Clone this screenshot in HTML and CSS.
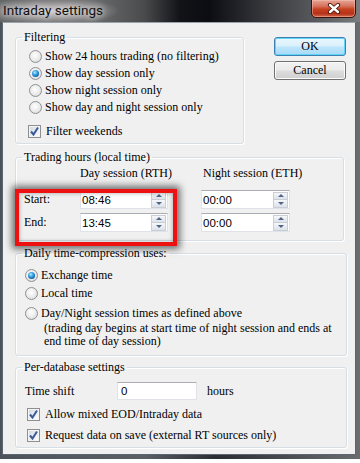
FILE: index.html
```html
<!DOCTYPE html>
<html>
<head>
<meta charset="utf-8">
<link rel="stylesheet" href="styles.css">
</head>
<body>
<div class="window">
  <div class="titlebar">
    <span class="title">Intraday settings</span>
    <div class="close">
      <svg width="14" height="11" viewBox="0 0 14 11"><path d="M3 2 L11 9 M11 2 L3 9" stroke="#4a1208" stroke-width="4.2" stroke-linecap="round"/><path d="M3 2 L11 9 M11 2 L3 9" stroke="#fff" stroke-width="2.4" stroke-linecap="round"/></svg>
    </div>
  </div>
  <div class="client">
    <div class="top-row">
      <fieldset class="group g-filter">
        <legend>Filtering</legend>
        <div class="filter-body">
          <div class="opt"><span class="radio"></span>Show 24 hours trading (no filtering)</div>
          <div class="opt"><span class="radio on"></span>Show day session only</div>
          <div class="opt"><span class="radio"></span>Show night session only</div>
          <div class="opt"><span class="radio"></span>Show day and night session only</div>
          <div class="opt chk-first"><span class="check"><svg width="11" height="11" viewBox="0 0 11 11"><path d="M2 5.5 L4.5 8.5 L9 1.5" fill="none" stroke="#3b5a9a" stroke-width="2"/></svg></span>Filter weekends</div>
        </div>
      </fieldset>
      <div class="buttons">
        <div class="btn default">OK</div>
        <div class="btn">Cancel</div>
      </div>
    </div>

    <fieldset class="group g-hours">
      <legend>Trading hours (local time)</legend>
      <div class="hours-grid">
        <span></span>
        <span class="colhead">Day session (RTH)</span>
        <span class="colhead night">Night session (ETH)</span>
        <span class="rowlab">Start:</span>
        <div class="field day"><span class="val">08:46</span><span class="spin"><span class="sp up"><i></i></span><span class="sp down"><i></i></span></span></div>
        <div class="field"><span class="val">00:00</span><span class="spin"><span class="sp up"><i></i></span><span class="sp down"><i></i></span></span></div>
        <span class="rowlab">End:</span>
        <div class="field day"><span class="val">13:45</span><span class="spin"><span class="sp up"><i></i></span><span class="sp down"><i></i></span></span></div>
        <div class="field"><span class="val">00:00</span><span class="spin"><span class="sp up"><i></i></span><span class="sp down"><i></i></span></span></div>
      </div>
      <div class="highlight"></div>
    </fieldset>

    <fieldset class="group g-daily">
      <legend>Daily time-compression uses:</legend>
      <div class="daily-body">
        <div class="opt"><span class="radio on"></span>Exchange time</div>
        <div class="opt"><span class="radio"></span>Local time</div>
        <div class="opt opt-dn"><span class="radio"></span>Day/Night session times as defined above</div>
        <div class="note">(trading day begins at start time of night session and ends at<br>end time of day session)</div>
      </div>
    </fieldset>

    <fieldset class="group g-db">
      <legend>Per-database settings</legend>
      <div class="db-body">
        <div class="shift-row">
          <span class="shift-lab">Time shift</span>
          <div class="field shift"><span class="val">0</span></div>
          <span class="hours">hours</span>
        </div>
        <div class="opt c1"><span class="check"><svg width="11" height="11" viewBox="0 0 11 11"><path d="M2 5.5 L4.5 8.5 L9 1.5" fill="none" stroke="#3b5a9a" stroke-width="2"/></svg></span>Allow mixed EOD/Intraday data</div>
        <div class="opt c2"><span class="check"><svg width="11" height="11" viewBox="0 0 11 11"><path d="M2 5.5 L4.5 8.5 L9 1.5" fill="none" stroke="#3b5a9a" stroke-width="2"/></svg></span>Request data on save (external RT sources only)</div>
      </div>
    </fieldset>
  </div>
</div>
</body>
</html>
```

FILE: styles.css
```css
* { box-sizing: border-box; }
html, body { margin: 0; padding: 0; background: #ffffff; }
body {
  font-family: "Liberation Serif", "Times New Roman", serif;
  font-size: 12px;
  color: #000;
}
.window {
  width: 360px;
  height: 459px;
  display: flex;
  flex-direction: column;
  background: linear-gradient(90deg, #4b525a 0%, #5b6066 40%, #2a2d31 60%, #6a6d70 100%);
}
.titlebar {
  height: 22px;
  display: flex;
  align-items: flex-start;
  padding-left: 3px;
  background:
    radial-gradient(ellipse 70px 14px at 50px 11px, rgba(235,225,225,0.75), rgba(200,190,195,0) 100%),
    linear-gradient(90deg, #626466 0%, #6d6e70 25%, #4a4b4d 40%, #111317 50%, #0b0d12 58%, #3a3c40 75%, #5d5f62 90%, #7a7c7e 100%);
}
.title {
  font-family: Roboto, "Noto Sans", sans-serif;
  font-size: 13.5px;
  line-height: 20px;
  color: #101010;
  text-shadow: 0 0 6px rgba(255,255,255,0.9), 0 0 10px rgba(255,255,255,0.6);
}
.close {
  margin-left: auto;
  margin-right: 4px;
  width: 45px;
  height: 19px;
  margin-top: -1px;
  border: 1px solid #3a1208;
  border-radius: 0 0 5px 5px;
  background: linear-gradient(#e6a594 0%, #d67560 35%, #c4401f 55%, #b8321a 80%, #d0694c 100%);
  box-shadow: inset 0 0 0 1px rgba(255,200,190,0.45);
  display: flex;
  align-items: center;
  justify-content: center;
}
.client {
  flex: 1;
  margin: 0 4px 4px 2px;
  border: 1px solid #5c6570;
  border-top-color: #9aa2ab;
  background: #f0f0f0;
  padding: 7px 0 0 12px;
}
.top-row { display: flex; align-items: flex-start; }
.group {
  margin: 0;
  padding: 0;
  border: 1px solid #d5dfe5;
  border-radius: 3px;
  box-shadow: inset 1px 1px 0 #fff, 1px 1px 0 #fff;
  min-width: 0;
}
.group legend {
  margin-left: 6px;
  padding: 0 2px;
  line-height: 14px;
  height: 14px;
}
.g-filter { width: 229px; }
.filter-body { padding: 4px 0 3px 13px; }
.opt {
  display: flex;
  align-items: center;
  height: 17px;
  white-space: nowrap;
}
.radio {
  width: 13px;
  height: 13px;
  border-radius: 50%;
  border: 1px solid #8f9194;
  background: radial-gradient(circle at 45% 40%, #ffffff 0%, #ececec 50%, #cfcfcf 100%);
  margin-right: 3px;
  display: flex;
  align-items: center;
  justify-content: center;
  flex: none;
}
.radio.on::after {
  content: "";
  width: 7px;
  height: 7px;
  border-radius: 50%;
  background: radial-gradient(circle at 40% 35%, #b6ecff 0%, #3fa6e6 35%, #0d5ea6 75%, #073c74 100%);
}
.check {
  width: 13px;
  height: 13px;
  border: 1px solid #8f8f8f;
  background: linear-gradient(135deg, #d0d6dc 0%, #eef0f2 60%, #ffffff 100%);
  box-shadow: inset 0 0 0 1px #f4f4f4;
  display: flex;
  align-items: center;
  justify-content: center;
  margin-right: 5px;
  flex: none;
}
.chk-first { margin-top: 7px; margin-left: -1px; }
.buttons {
  margin-left: 30px;
  margin-top: 7px;
  display: flex;
  flex-direction: column;
  gap: 5px;
}
.btn {
  width: 72px;
  height: 19px;
  border: 1px solid #707070;
  border-radius: 3px;
  background: linear-gradient(#f2f2f2 0%, #ebebeb 48%, #dddddd 52%, #cfcfcf 100%);
  box-shadow: inset 0 0 0 1px #fbfbfb;
  text-align: center;
  line-height: 17px;
}
.btn.default {
  border-color: #3c7fb1;
  background: linear-gradient(#eaf6fd 0%, #d9f0fc 48%, #bee6fd 52%, #a7d9f5 100%);
  box-shadow: inset 0 0 0 1px #62d4f8;
}
.g-hours {
  width: 329px;
  margin-top: 6px;
  position: relative;
}
.hours-grid {
  display: grid;
  grid-template-columns: 56px 121px 89px;
  grid-template-rows: 20px 19px 19px;
  row-gap: 4px;
  padding: 2px 0 8px 8px;
}
.colhead { line-height: 14px; white-space: nowrap; align-self: start; }
.colhead.night { padding-left: 2px; }
.rowlab { display: flex; align-items: center; }
.field {
  height: 19px;
  background: #fff;
  border: 1px solid #dfe3e9;
  border-top-color: #abadb3;
  border-left-color: #e2e3ea;
  display: flex;
  align-items: center;
  padding: 0 1px 0 1px;
}
.field.day { width: 88px; }
.val {
  font-family: "Liberation Sans", Arial, sans-serif;
  font-size: 11.5px;
  flex: 1;
}
.spin {
  width: 15px;
  height: 16px;
  display: flex;
  flex-direction: column;
  border: 1px solid #c9ced6;
}
.sp {
  flex: 1;
  display: flex;
  align-items: center;
  justify-content: center;
  background: linear-gradient(#f6f7f9, #dde2ea);
}
.sp.up { border-bottom: 1px solid #c9ced6; }
.sp i {
  width: 0;
  height: 0;
  border-left: 3px solid transparent;
  border-right: 3px solid transparent;
}
.sp.up i { border-bottom: 3px solid #4e6488; }
.sp.down i { border-top: 3px solid #4e6488; }
.highlight {
  position: absolute;
  left: -1px;
  top: 25px;
  width: 162px;
  height: 57px;
  border: 4px solid #ee1111;
  box-shadow: 0 0 7px 3px rgba(0,0,0,0.55), inset 0 0 4px rgba(0,0,0,0.35);
}
.g-daily {
  width: 332px;
  margin-top: 5px;
}
.daily-body { padding: 6px 0 8px 9px; }
.daily-body .opt { height: 18px; }
.daily-body .opt-dn { margin-top: 2px; }
.note {
  padding-left: 19px;
  line-height: 12.5px;
  margin-top: 0;
}
.g-db {
  width: 332px;
  margin-top: 4px;
}
.db-body { padding: 8px 0 3px 9px; }
.shift-row {
  display: flex;
  align-items: center;
  height: 18px;
}
.shift-lab { width: 92px; }
.field.shift { width: 80px; height: 18px; padding-left: 3px; }
.hours { margin-left: 10px; }
.db-body .c1 { margin-top: 6px; margin-left: 2px; }
.db-body .c2 { margin-top: 4px; margin-left: 2px; }
```
